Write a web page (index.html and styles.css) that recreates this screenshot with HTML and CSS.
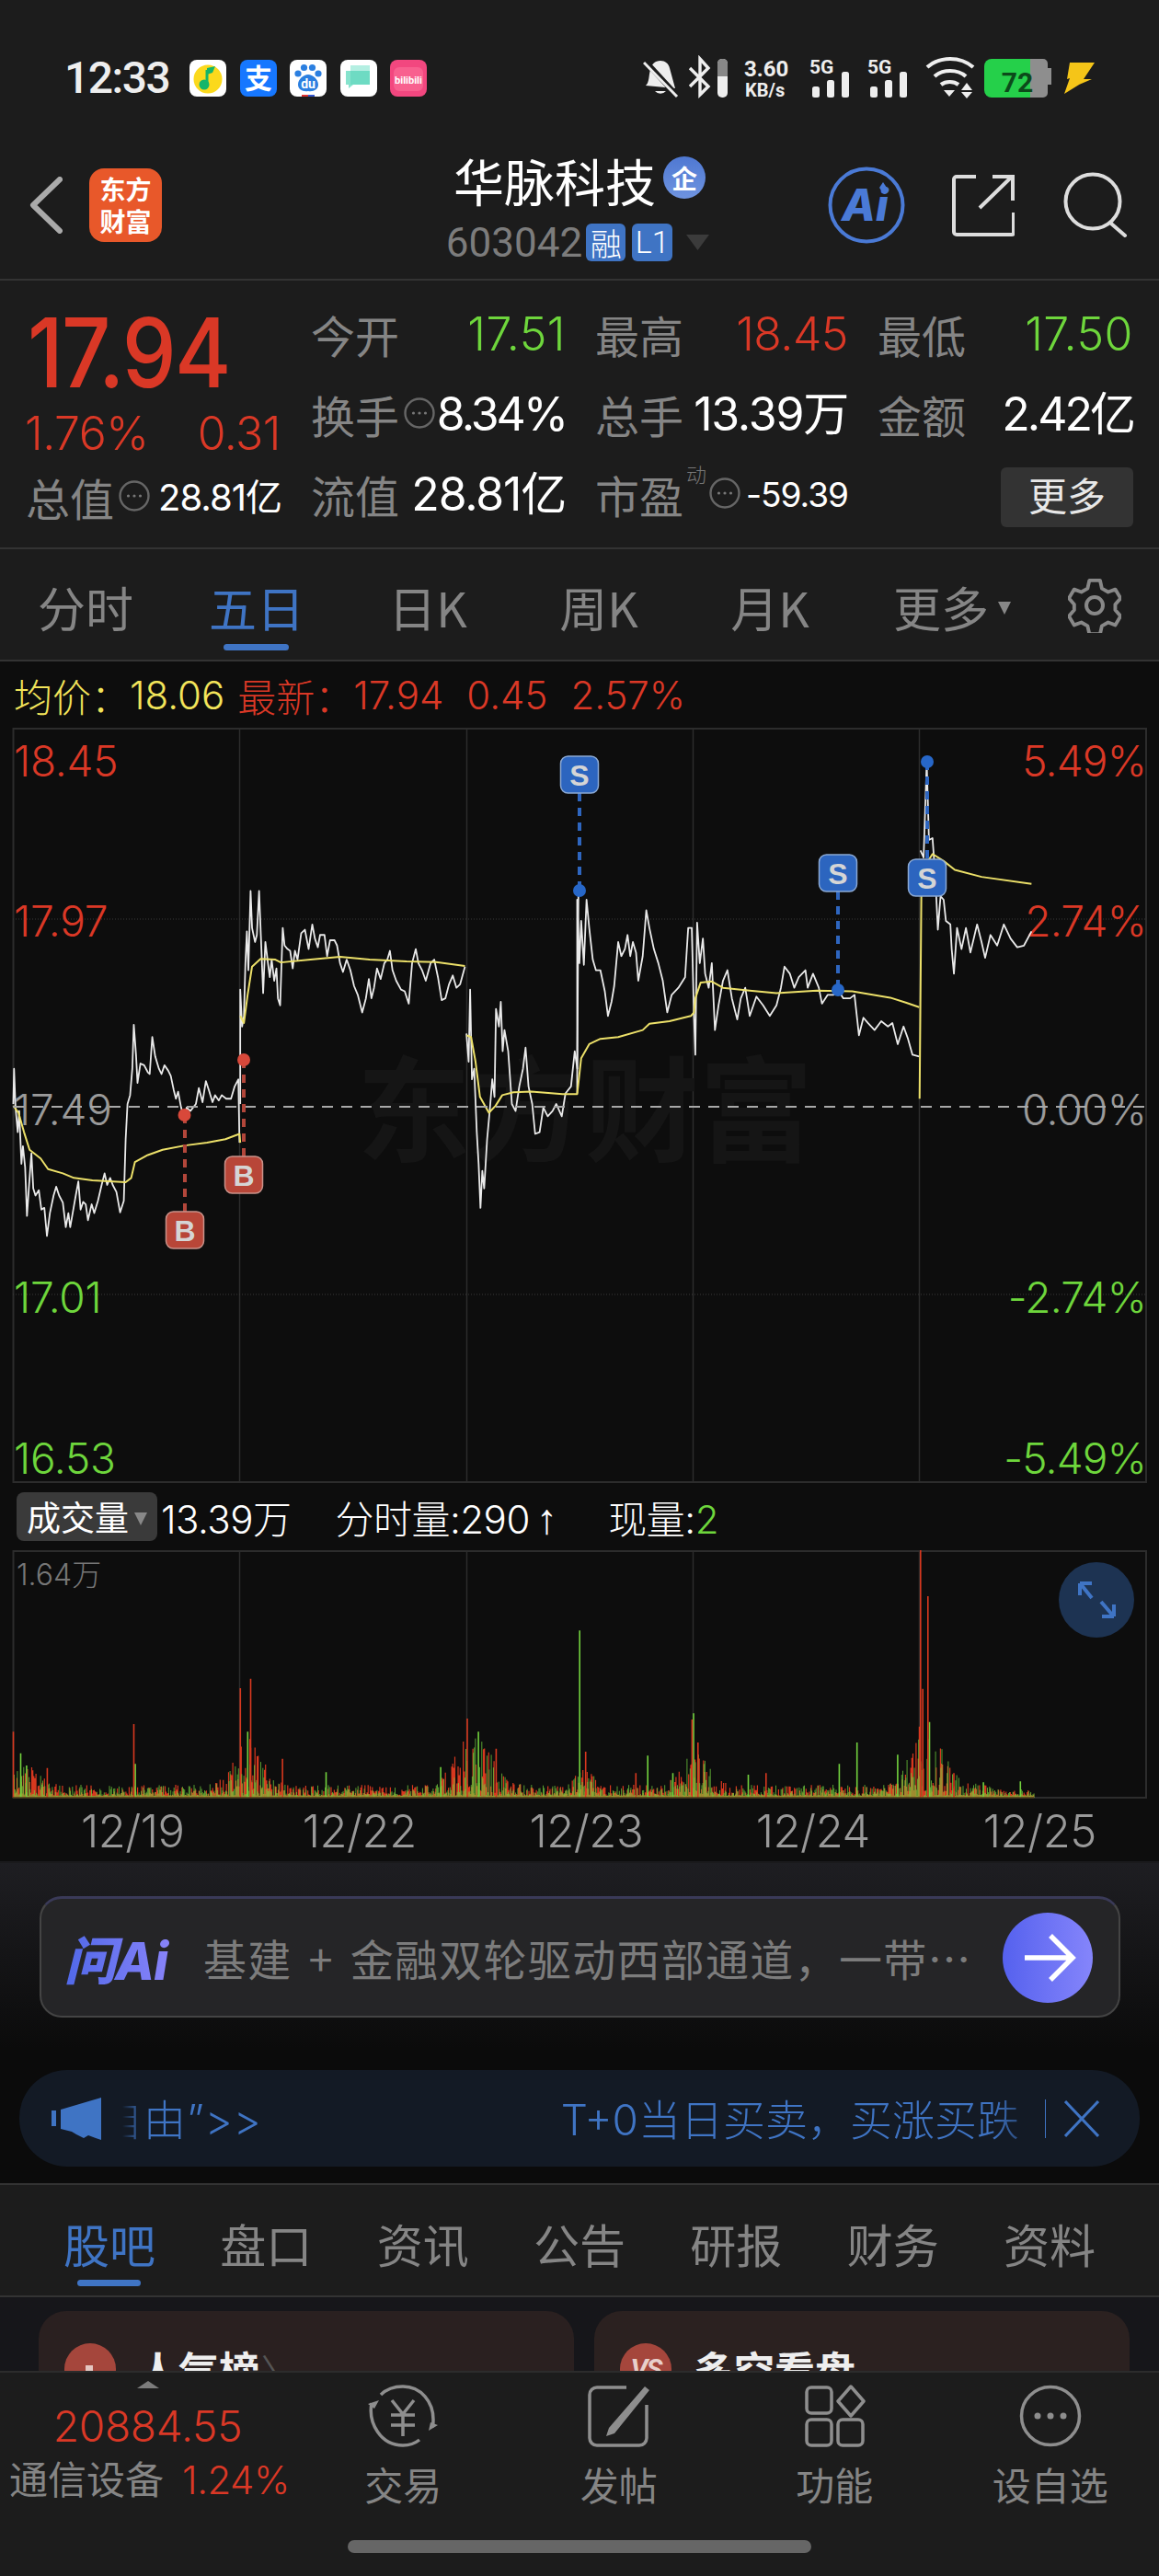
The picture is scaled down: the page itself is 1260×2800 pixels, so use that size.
FILE: index.html
```html
<!DOCTYPE html>
<html lang="zh-CN">
<head>
<meta charset="utf-8">
<title>华脉科技</title>
<link rel="stylesheet" href="styles.css">
</head>
<body>
<svg class="defs" aria-hidden="true"><symbol id="dots" viewBox="0 0 34 34"><circle cx="17" cy="17" r="15.5" fill="none" stroke="#666" stroke-width="2.4"/><circle cx="10.5" cy="17" r="1.6" fill="#777"/><circle cx="17" cy="17" r="1.6" fill="#777"/><circle cx="23.5" cy="17" r="1.6" fill="#777"/></symbol></svg>
<div class="page">
  <div class="status">
    <span class="time">12:33</span>
    <div class="apps">
      <svg class="app" viewBox="0 0 40 40"><rect width="40" height="40" rx="8" fill="#fff"/><circle cx="20" cy="21" r="15.5" fill="#fbd91c"/><path d="M19 11v16" stroke="#14b56a" stroke-width="3"/><circle cx="16" cy="27" r="5.5" fill="#14b56a"/><path d="M19 9l9-2-3 7-6 2z" fill="#14b56a"/></svg>
      <svg class="app" viewBox="0 0 40 40"><rect width="40" height="40" rx="8" fill="#1677ff"/><text x="20" y="31" class="app-zhi">支</text></svg>
      <svg class="app" viewBox="0 0 40 40"><rect width="40" height="40" rx="8" fill="#fff"/><path d="M9 27c0-6 6-11 11-11s11 5 11 11c0 5-5 8-11 7-6 1-11-2-11-7z" fill="#2b7fe0"/><circle cx="9" cy="15" r="3.6" fill="#2b7fe0"/><circle cx="15.500" cy="8.500" r="3.6" fill="#2b7fe0"/><circle cx="24.500" cy="8.500" r="3.6" fill="#2b7fe0"/><circle cx="31" cy="15" r="3.6" fill="#2b7fe0"/><text x="20" y="31" class="app-du">du</text><rect x="13" y="38" width="7" height="2" fill="#d33"/><rect x="20" y="38" width="7" height="2" fill="#35c"/></svg>
      <svg class="app" viewBox="0 0 40 40"><rect width="40" height="40" rx="8" fill="#fff"/><path d="M11 6h21v20H11z" fill="#b4efe2"/><path d="M6 12h26v15H14l-5 4v-4H6z" fill="#86e3cd"/><path d="M11 12h21v15H11z" fill="#5fd6bd" opacity=".6"/></svg>
      <svg class="app" viewBox="0 0 40 40"><rect width="40" height="40" rx="8" fill="#f2477f"/><rect x="4" y="8" width="32" height="26" rx="6" fill="#f8608f"/><text x="20" y="26" class="app-bili">bilibili</text></svg>
    </div>
    <svg class="status-right" viewBox="699 60 495 50">
      <path d="M702 93c4-4 3-10 5-17 1-6 5-10 11-10 5 0 9 3 10 8l6 22z M712 99a8 8 0 0 0 12 0z" fill="#eee"/><path d="M701 66l35 38" stroke="#1c1c1c" stroke-width="6"/><path d="M700 68l36 37" stroke="#eee" stroke-width="3"/>
      <path d="M750 74l20 20-9 9V64l9 10-20 20" fill="none" stroke="#eee" stroke-width="3.4"/>
      <rect x="780" y="64" width="11" height="42" rx="5" fill="#eee"/><path d="M780 69a5 5 0 0 1 5-5h1a5 5 0 0 1 5 5v14h-11z" fill="#888"/>
      <text x="809" y="83" class="st-net">3.60</text><text x="810" y="105" class="st-kb">KB/s</text>
      <text x="880" y="80" class="st-5g">5G</text><g fill="#eee"><rect x="883" y="94" width="8" height="12" rx="2.500"/><rect x="899" y="87" width="8" height="19" rx="2.500"/><rect x="915" y="78" width="8" height="28" rx="2.500"/></g>
      <text x="943" y="80" class="st-5g">5G</text><g fill="#eee"><rect x="946" y="94" width="8" height="12" rx="2.500"/><rect x="962" y="87" width="8" height="19" rx="2.500"/><rect x="978" y="78" width="8" height="28" rx="2.500"/></g>
      <g fill="none" stroke="#eee" stroke-width="4.200"><path d="M1008 73c14-12 36-12 50 0"/><path d="M1016 83c9-8 25-8 34 0"/><path d="M1023 92c5-4 14-4 19 0" /></g>
      <path d="M1026 98h12l-6 7zM1051 90l6 8h-12zM1045 100h12l-6 7z" fill="#eee"/>
      <path d="M1070 72a8 8 0 0 1 8-8h42v42h-42a8 8 0 0 1-8-8z" fill="#25d04a"/><path d="M1120 64h14a5 5 0 0 1 5 5v5h4v18h-4v9a5 5 0 0 1-5 5h-14z" fill="#8e8e8e"/>
      <text x="1106" y="100" class="st-batt">72</text>
      <path d="M1163 68h27l-12 18h9l-14 6 5-3-21 13 6-17-3 1z" fill="#f5c518"/>
    </svg>
  </div>

  <header class="head">
    <div class="head-left">
      <svg class="back" viewBox="0 0 36 62"><path d="M33 3L4 31l29 28" fill="none" stroke="#aaa" stroke-width="6" stroke-linecap="round" stroke-linejoin="round"/></svg>
      <div class="logo"><span>东方</span><span>财富</span></div>
    </div>
    <div class="head-mid">
      <div class="title-row"><span class="title">华脉科技</span><span class="qi">企</span></div>
      <div class="sub-row"><span class="code">603042</span><span class="tag">融</span><span class="tag tag-l">L1</span><svg class="caret" viewBox="0 0 25 17"><path d="M0 0h25L12.500 17z" fill="#3b3b3b"/></svg></div>
    </div>
    <div class="head-right">
      <svg class="ic-ai" viewBox="0 0 84 84"><circle cx="42" cy="42" r="39.500" fill="none" stroke="#4a7ad6" stroke-width="4"/><text x="15" y="59" class="ai-txt">Ai</text><path d="M60 17l4 6-4 6-4-6z" fill="#4a7ad6"/></svg>
      <svg class="ic-share" viewBox="0 0 68 68"><path d="M26 3H5a3 3 0 0 0-3 3v57a3 3 0 0 0 3 3h60a2 2 0 0 0 2-2V42" fill="none" stroke="#ddd" stroke-width="4"/><path d="M30 37L65 3M44 3h22v26" fill="none" stroke="#ddd" stroke-width="4"/></svg>
      <svg class="ic-search" viewBox="0 0 70 72"><circle cx="32" cy="32" r="29.500" fill="none" stroke="#ddd" stroke-width="4"/><path d="M52 56l15 13" stroke="#ddd" stroke-width="4" stroke-linecap="round"/></svg>
    </div>
  </header>

  <section class="quote">
    <div class="q-left">
      <div class="price-row"><span class="price">17.94</span></div>
      <div class="change-row"><span>1.76%</span><span>0.31</span></div>
      <div class="cap-row"><span class="lbl">总值</span><svg class="dots"><use href="#dots"/></svg><span class="val cap-val">28.81亿</span></div>
    </div>
    <div class="q-grid">
      <div class="cell"><span class="lbl">今开</span><span class="val green">17.51</span></div>
      <div class="cell"><span class="lbl">最高</span><span class="val red">18.45</span></div>
      <div class="cell"><span class="lbl">最低</span><span class="val green">17.50</span></div>
      <div class="cell"><span class="lbl">换手</span><svg class="dots"><use href="#dots"/></svg><span class="val val-tight">8.34%</span></div>
      <div class="cell"><span class="lbl">总手</span><span class="val val-mid">13.39万</span></div>
      <div class="cell"><span class="lbl">金额</span><span class="val val-tight">2.42亿</span></div>
      <div class="cell"><span class="lbl">流值</span><span class="val val-mid">28.81亿</span></div>
      <div class="cell cell-pe"><span class="lbl">市盈</span><sup class="dyn">动</sup><svg class="dots"><use href="#dots"/></svg><span class="val pe-val">-59.39</span></div>
      <div class="cell cell-more"><span class="more-btn">更多</span></div>
    </div>
  </section>

  <nav class="tabs">
    <span class="tab">分时</span>
    <span class="tab tab-on">五日</span>
    <span class="tab">日K</span>
    <span class="tab">周K</span>
    <span class="tab">月K</span>
    <span class="tab">更多<i class="tri"></i></span>
    <svg class="gear" viewBox="0 0 58 60"><path d="M23 3h12l2 9 7 4 8-3 6 10-6 7v6l6 7-6 10-8-3-7 4-2 9H23l-2-9-7-4-8 3-6-10 6-7v-6l-6-7 6-10 8 3 7-4z" transform="translate(1 0) scale(.97)" fill="none" stroke="#888" stroke-width="4" stroke-linejoin="round"/><circle cx="29" cy="30" r="9" fill="none" stroke="#888" stroke-width="4"/></svg>
  </nav>

  <main class="chart-wrap">
    <div class="avg"><span class="yel">均价：</span><span class="yel avg-n">18.06</span><span class="red avg-l">最新：</span><span class="red avg-n">17.94</span><span class="red avg-n avg-g">0.45</span><span class="red avg-n avg-g">2.57%</span></div>
    <svg class="price-chart" viewBox="0 792 1260 820">
      <rect x="14.500" y="793" width="1231.500" height="819" fill="none" stroke="#2c2c2c" stroke-width="2"/>
      <path d="M260.500 793V1612M507.500 793V1612M753.500 793V1612M999.500 793V1612" stroke="#2c2c2c" stroke-width="1.500"/>
      <path d="M14 1000H1246M14 1408H1246" stroke="#3a3a3a" stroke-dasharray="1 2"/>
      <text x="388" y="1254" class="wm">东方财富</text>
      <text x="15" y="845" class="lab red">18.45</text><text x="15" y="1019" class="lab red">17.97</text><text x="15" y="1224" class="lab gray">17.49</text><text x="15" y="1428" class="lab green">17.01</text><text x="15" y="1603" class="lab green">16.53</text>
      <text x="1246" y="845" class="lab lab-r red">5.49%</text><text x="1246" y="1019" class="lab lab-r red">2.74%</text><text x="1246" y="1224" class="lab lab-r gray">0.00%</text><text x="1246" y="1428" class="lab lab-r green">-2.74%</text><text x="1246" y="1603" class="lab lab-r green">-5.49%</text>
      <g transform="translate(0 780) scale(.4018 .3827)">
        <polyline class="ln-w" points="36,1100 38,1000 42,1110 48,1180 52,1120 58,1270 62,1220 68,1280 73,1418 78,1340 85,1240 90,1340 96,1360 105,1345 112,1400 120,1395 127,1475 135,1410 145,1360 152,1335 160,1360 170,1380 178,1450 185,1410 190,1450 200,1390 205,1360 212,1320 218,1400 225,1378 232,1385 238,1430 248,1385 255,1410 265,1375 275,1330 283,1297 290,1330 298,1310 305,1330 315,1350 325,1408 335,1375 340,1200 345,1100 352,1075 358,1000 362,875 368,960 372,1040 380,985 390,990 400,1010 405,1015 412,910 420,965 430,1000 437,1015 445,990 455,1005 462,1020 470,1060 476,1085 482,1065 490,1110 498,1140 505,1110 515,1120 530,1100 538,1055 548,1095 557,1035 565,1060 575,1095 582,1075 592,1090 600,1075 612,1085 625,1085 635,1050 645,1030 648,1210"/>
        <polyline class="ln-w" points="650,1100 650,775 655,880 660,850 664,700 668,610 672,720 678,495 682,600 690,640 695,620 701,495 705,600 712,785 718,640 725,700 730,740 735,690 742,750 748,715 752,800 758,820 765,600 770,650 778,660 785,665 792,715 798,665 805,690 815,615 825,605 835,660 845,590 852,630 860,655 866,620 878,620 885,680 893,635 905,635 912,650 920,700 928,725 938,690 948,720 958,765 968,790 980,840 990,800 998,745 1005,800 1012,770 1020,715 1030,745 1040,700 1048,690 1055,665 1062,720 1072,750 1085,775 1095,780 1106,815 1115,700 1125,660 1132,700 1142,720 1152,750 1165,700 1175,690 1185,740 1195,805 1205,800 1215,760 1225,735 1235,770 1245,760 1258,710"/>
        <polyline class="ln-w" points="1262,900 1268,980 1272,775 1277,1030 1283,1000 1290,1180 1295,1270 1300,1395 1305,1290 1310,1340 1318,1200 1325,1120 1332,1030 1338,1080 1342,830 1350,880 1355,810 1360,950 1365,890 1375,950 1385,1100 1395,1120 1405,1050 1415,1000 1422,940 1430,1050 1440,1100 1448,1185 1460,1180 1470,1110 1482,1135 1495,1120 1505,1100 1520,1135 1530,1070 1545,1050 1555,950 1562,1000 1565,500"/>
        <polyline class="ln-y" points="36,1105 50,1125 65,1180 80,1230 110,1255 130,1285 170,1297 200,1310 250,1317 340,1322 355,1310 365,1265 400,1245 440,1230 500,1218 560,1210 610,1200 648,1185 650,1210"/>
        <polyline class="ln-y" points="650,850 660,870 670,790 682,710 705,688 745,690 760,698 840,690 920,682 1000,690 1100,695 1180,697 1258,708"/>
      </g>
      <g transform="translate(500 780) scale(.4847 .3827)">
        <polyline class="ln-w" points="263,1070 263,520 268,700 272,580 278,705 284,520 290,600 298,690 305,720 315,720 325,780 332,850 340,810 346,765 355,640 362,680 370,660 376,620 382,680 388,640 395,670 400,750 410,680 418,550 425,600 435,660 445,700 455,750 465,840 475,790 490,770 505,740 512,600 520,600 525,850 528,960 532,585 538,700 545,630 550,730 558,770 565,700 572,890 580,820 590,750 600,720 610,800 622,860 630,800 640,770 650,850 665,795 680,820 695,850 710,820 720,770 728,710 740,730 750,770 760,740 775,720 780,770 792,730 805,770 812,815 825,790 838,790 850,780 860,800 875,800 885,790 895,905 905,855 915,870 930,890 945,865 960,880 970,870 982,930 995,880 1005,915 1015,960 1030,965"/>
        <polyline class="ln-w" points="1033,380 1040,400 1047,130 1052,350 1060,345 1066,450 1072,605 1078,510 1085,520 1090,580 1100,590 1103,660 1108,730 1115,600 1125,660 1135,600 1145,670 1160,590 1170,640 1178,685 1190,620 1205,650 1220,590 1235,630 1250,655 1265,650 1282,610"/>
        <polyline class="ln-y" points="15,905 25,910 35,980 45,1080 65,1125 80,1105 95,1075 120,1067 160,1065 230,1072 263,1072 272,970 290,930 315,915 355,910 410,890 425,872 470,865 518,850 525,840 528,800 540,755 565,752 590,770 650,778 710,785 800,778 880,780 965,798 1000,812 1030,825"/>
        <polyline class="ln-y" points="1031,1085 1035,500 1045,420 1060,390 1085,410 1110,435 1170,455 1282,475"/>
      </g>
      <path d="M14 1204H1246" stroke="#a8a8a8" stroke-width="2" stroke-dasharray="12 9"/>
      <path d="M201 1213V1318M265 1153V1258" class="mk-line-b"/>
      <path d="M630 863V969M911 970V1077M1008 829V935" class="mk-line-s"/>
      <circle cx="200.500" cy="1213" r="7" fill="#d8483a"/><circle cx="265" cy="1153" r="7" fill="#d8483a"/>
      <circle cx="630" cy="969" r="7" fill="#2767c8"/><circle cx="911" cy="1077" r="7" fill="#2767c8"/><circle cx="1008" cy="829" r="7" fill="#2767c8"/>
      <g class="bdg-b"><rect x="180.500" y="1318" width="41" height="40" rx="8"/><text x="201" y="1350">B</text><rect x="244.500" y="1258" width="41" height="40" rx="8"/><text x="265" y="1290">B</text></g>
      <g class="bdg-s"><rect x="609.500" y="823" width="41" height="40" rx="8"/><text x="630" y="855">S</text><rect x="890.500" y="930" width="41" height="40" rx="8"/><text x="911" y="962">S</text><rect x="987.500" y="935" width="41" height="40" rx="8"/><text x="1008" y="967">S</text></g>
    </svg>
    <div class="vol-row">
      <span class="vol-sel">成交量<i class="tri tri-sm"></i></span>
      <span class="vol-t">13.39万</span>
      <span class="vol-t vol-a">分时量:290<span class="arr">↑</span></span>
      <span class="vol-t vol-b">现量:<span class="green">2</span></span>
    </div>
    <svg class="vol-chart" viewBox="0 1686 1260 270">
      <rect x="14.500" y="1687" width="1231.500" height="268" fill="none" stroke="#2c2c2c" stroke-width="2"/>
      <path d="M260.500 1687V1955M507.500 1687V1955M753.500 1687V1955M999.500 1687V1955" stroke="#2c2c2c" stroke-width="1.500"/>
      <g id="bars"></g>
      <text x="18" y="1724" class="vol-max">1.64万</text>
      <circle cx="1192" cy="1740" r="41" fill="#1d3352"/>
      <path d="M1174 1722h13M1174 1722v13M1175 1723l12 15M1211 1758h-13M1211 1758v-13M1209 1756l-12-14" fill="none" stroke="#3f74c4" stroke-width="4"/>
    </svg>
    <div class="dates"><span>12/19</span><span>12/22</span><span>12/23</span><span>12/24</span><span>12/25</span></div>
  </main>

  <section class="promo">
    <div class="ask">
      <span class="ask-logo">问Ai</span>
      <span class="ask-text">基建 + 金融双轮驱动西部通道，一带…</span>
      <svg class="ask-go" viewBox="0 0 98 98"><defs><linearGradient id="g1" x1="0" x2="1"><stop offset="0" stop-color="#5561ee"/><stop offset="1" stop-color="#8585fb"/></linearGradient></defs><circle cx="49" cy="49" r="49" fill="url(#g1)"/><path d="M24 49h50M52 25l24 24-24 24" fill="none" stroke="#fff" stroke-width="5.500"/></svg>
    </div>
    <div class="notice">
      <svg class="spk" viewBox="0 0 56 46"><path d="M0 14h5v17H0zM10 13l44-13v46l-6-2-8-3-5 3-8-4-5-3-12-3z" fill="#3f74c4"/></svg>
      <span class="n-left">自由”&gt;&gt;</span>
      <span class="n-right">T+0当日买卖，买涨买跌</span>
      <i class="n-sep"></i>
      <svg class="n-x" viewBox="0 0 38 40"><path d="M1 1l36 38M37 1L1 39" fill="none" stroke="#3f74c4" stroke-width="3"/></svg>
    </div>
  </section>

  <section class="sub-tabs">
    <span class="stab stab-on">股吧</span><span class="stab">盘口</span><span class="stab">资讯</span><span class="stab">公告</span><span class="stab">研报</span><span class="stab">财务</span><span class="stab">资料</span>
  </section>

  <section class="cards">
    <div class="card"><i class="card-dot">
      <svg class="card-ic" viewBox="0 0 56 56"><path d="M14 30h6v20h-6zM23 24h8v26h-8zM34 34h8v16h-8z" fill="#e5c7c2"/></svg></i><span class="card-t">人气榜</span><span class="card-c">〉</span></div>
    <div class="card card-b"><i class="card-dot card-vs">VS</i><span class="card-t">多空看盘</span></div>
  </section>

  <footer class="nav">
    <div class="nav-idx">
      <i class="nav-up"></i>
      <span class="idx-v">20884.55</span>
      <span class="idx-n">通信设备<b class="idx-p">1.24%</b></span>
    </div>
    <div class="nav-it">
      <svg class="nav-ic" viewBox="0 0 76 68"><path d="M4 20C0 42 14 66 38 66c7 0 13-2 18-6M14 11C20 5 28 2 38 2c20 0 33 17 33 36 0 3 0 6-1 8" fill="none" stroke="#8e8e8e" stroke-width="3.500"/><path d="M0 21l12-4-5 9zM76 44l-10 6 2-9z" fill="#8e8e8e"/><path d="M26 17l12 15 12-15M38 32v24M25 33h26M25 44h26" fill="none" stroke="#8e8e8e" stroke-width="3.500"/></svg>
      <span>交易</span>
    </div>
    <div class="nav-it">
      <svg class="nav-ic" viewBox="0 0 76 68"><path d="M46 3H14a8 8 0 0 0-8 8v47a8 8 0 0 0 8 8h46a8 8 0 0 0 8-8V22" fill="none" stroke="#8e8e8e" stroke-width="3.500"/><path d="M66 2l5 4-38 47-9 3 3-9z" fill="#8e8e8e"/></svg>
      <span>发帖</span>
    </div>
    <div class="nav-it">
      <svg class="nav-ic" viewBox="0 0 76 68"><g fill="none" stroke="#8e8e8e" stroke-width="3.500"><rect x="8" y="3" width="27" height="28" rx="5"/><rect x="8" y="38" width="27" height="28" rx="5"/><rect x="42" y="38" width="27" height="28" rx="5"/><path d="M56 2l14 16-14 16-14-16z" stroke-linejoin="round"/></g></svg>
      <span>功能</span>
    </div>
    <div class="nav-it">
      <svg class="nav-ic" viewBox="0 0 76 68"><circle cx="38" cy="34" r="31.500" fill="none" stroke="#8e8e8e" stroke-width="3.500"/><circle cx="24" cy="34" r="3.500" fill="#8e8e8e"/><circle cx="38" cy="34" r="3.500" fill="#8e8e8e"/><circle cx="52" cy="34" r="3.500" fill="#8e8e8e"/></svg>
      <span>设自选</span>
    </div>
    <i class="home-bar"></i>
  </footer>
</div>
<script src="chart.js"></script>
</body>
</html>
```
FILE: styles.css
```css
* { box-sizing: border-box; }
html, body { margin: 0; padding: 0; background: #1c1c1c; }
.defs { position: absolute; width: 0; height: 0; }
.page { width: 1260px; height: 2800px; overflow: hidden; background: #1c1c1c; color: #fff; font-family: Inter, "Noto Sans CJK SC", sans-serif; display: flex; flex-direction: column; }
svg text { font-family: Inter, "Noto Sans CJK SC", sans-serif; }
i { font-style: normal; display: block; }
.red { color: #da3826; fill: #da3826; }
.green { color: #6ed63c; fill: #6ed63c; }
.gray { fill: #9a9a9a; }
.yel { color: #f2e45a; }

.status { height: 100px; flex: none; display: flex; align-items: flex-start; padding: 62px 0 0 70px; }
.time { font: 500 48px/46px Roboto, sans-serif; width: 136px; color: #eee; letter-spacing: -1.500px; }
.apps { display: flex; gap: 14.600px; margin-top: 3px; }
.app { width: 40px; height: 40px; display: block; }
.app-zhi { font-size: 30px; fill: #fff; text-anchor: middle; font-weight: 700; }
.app-du { font: 700 14px Roboto, sans-serif; fill: #fff; text-anchor: middle; }
.app-bili { font: 700 11px Roboto, sans-serif; fill: #fff; text-anchor: middle; }
.status-right { width: 495px; height: 50px; margin-left: auto; margin-right: 66px; margin-top: -2px; display: block; }
svg text.st-net { font: 700 24px Roboto, sans-serif; fill: #eee; }
svg text.st-kb { font: 700 20px Roboto, sans-serif; fill: #eee; }
svg text.st-5g { font: 700 21px Roboto, sans-serif; fill: #eee; }
svg text.st-batt { font: 700 30px Roboto, sans-serif; fill: #0c4a1a; text-anchor: middle; }

.head { height: 205px; flex: none; display: grid; grid-template-columns: 1fr auto 1fr; align-items: center; padding-top: 42px; border-bottom: 2px solid #333; }
.head-left { display: flex; align-items: center; padding-left: 32px; gap: 29px; }
.back { width: 36px; height: 62px; display: block; }
.logo { width: 79px; height: 80px; border-radius: 16px; background: #e8582a; display: flex; flex-direction: column; align-items: center; justify-content: center; font-family: "Noto Sans CJK SC", sans-serif; font-size: 28px; line-height: 35px; font-weight: 700; }
.head-mid { display: flex; flex-direction: column; align-items: center; margin-top: 9px; }
.title-row { display: flex; align-items: center; gap: 8px; height: 70px; }
.title { font-size: 55px; line-height: 70px; font-family: "Noto Sans CJK SC", sans-serif; }
.qi { width: 46px; height: 46px; border-radius: 50%; background: linear-gradient(#4f78d2, #6f94e0); font-size: 28px; font-weight: 700; display: flex; align-items: center; justify-content: center; margin-top: -4px; }
.sub-row { display: flex; align-items: center; height: 62px; margin-top: 3px; padding-right: 4px; }
.code { font: 400 44px/62px Roboto, sans-serif; color: #7c7c7c; margin-right: 4px; }
.tag { width: 43px; height: 41px; border-radius: 6px; background: #3f74c4; color: #fff; font-size: 34px; line-height: 41px; text-align: center; font-family: "Noto Sans CJK SC", sans-serif; font-weight: 300; }
.tag-l { width: 44px; margin-left: 7px; font-family: Roboto, sans-serif; }
.caret { width: 25px; height: 17px; margin-left: 15px; display: block; }
.head-right { display: flex; justify-content: flex-end; align-items: center; padding-right: 34px; }
.ic-ai { width: 84px; height: 84px; margin-right: 51px; }
svg text.ai-txt { font-size: 48px; font-weight: 800; font-style: italic; fill: #4a7ad6; font-family: Inter, sans-serif; }
.ic-share { width: 68px; height: 68px; margin-right: 53px; }
.ic-search { width: 70px; height: 72px; }

.quote { height: 292px; flex: none; display: flex; padding: 15px 28px 0 30px; border-bottom: 2px solid #333; }
.q-left { width: 308px; flex: none; display: flex; flex-direction: column; }
.price-row { height: 125px; }
.price { display: inline-block; font-size: 104px; line-height: 126px; font-weight: 500; color: #da3826; letter-spacing: -2px; transform: scaleX(.9); transform-origin: left center; }
.change-row { width: 278px; height: 50px; margin: 1px 0 0 -3px; display: flex; justify-content: space-between; color: #da3826; font-size: 50px; line-height: 50px; font-weight: 300; letter-spacing: -.5px; }
.cap-row { display: flex; align-items: center; height: 87px; margin: 1px 0 0 -2px; width: 278px; }
.lbl { color: #858585; font-size: 48px; line-height: 87px; font-family: "Noto Sans CJK SC", sans-serif; font-weight: 400; white-space: nowrap; }
.val { color: #fff; font-size: 50px; line-height: 87px; font-weight: 400; margin-left: auto; white-space: nowrap; letter-spacing: -.5px; }
.val.green { color: #6ed63c; font-weight: 300; letter-spacing: .5px; }
.val.red { color: #da3826; font-weight: 300; }
.val-mid { letter-spacing: -1.200px; }
.val-tight { letter-spacing: -3px; }
.cap-val { font-size: 40px; letter-spacing: -1px; }
.dots { width: 34px; height: 34px; margin-left: 5px; flex: none; margin-top: -4px; }
.q-grid { flex: 1; display: grid; grid-template-columns: 277px 275px 278px; grid-auto-rows: 87px; column-gap: 32px; }
.cell { display: flex; align-items: center; }
.dyn { font-size: 22px; line-height: 24px; color: #777; font-weight: 300; margin: -44px 3px 0 3px; }
.pe-val { font-size: 37px; letter-spacing: -1px; }
.cell-pe .dots { margin-left: 0; }
.cell-more { justify-content: flex-end; }
.more-btn { width: 144px; height: 65px; border-radius: 6px; background: #333; text-align: center; font-size: 42px; line-height: 63px; color: #e8e8e8; font-weight: 400; margin-top: 5px; }

.tabs { height: 122px; flex: none; display: grid; grid-template-columns: repeat(5, 186px) 1fr 100px; padding: 8px 20px 2px 0; align-items: center; border-bottom: 2px solid #333; }
.tab { position: relative; text-align: center; font-size: 52px; line-height: 76px; color: #858585; font-weight: 400; font-family: "Noto Sans CJK SC", sans-serif; }
.tab-on { color: #3f74c4; }
.tab-on::after { content: ""; position: absolute; left: 57px; top: 78px; width: 71px; height: 7px; border-radius: 4px; background: #3f74c4; }
.tri { display: inline-block; width: 0; height: 0; border: 7.500px solid transparent; border-top: 14px solid #888; border-bottom: 0; margin-left: 10px; vertical-align: 14px; }
.tri-sm { border-top-color: #888; margin-left: 6px; vertical-align: 6px; }
.gear { width: 58px; height: 60px; justify-self: center; margin-top: -5px; }

.chart-wrap { background: #0d0d0d; height: 1304px; flex: none; display: flex; flex-direction: column; }
.avg { height: 72px; flex: none; display: flex; align-items: center; padding-left: 15px; font-size: 42px; font-weight: 300; }
.avg span { white-space: nowrap; }
.avg-l { margin-left: 14px; }
.avg-g { margin-left: 25px; }
.price-chart { width: 1260px; height: 820px; display: block; flex: none; overflow: visible; }
.wm { font-size: 124px; font-weight: 700; fill: #151515; }
.lab { font-size: 46px; font-weight: 300; letter-spacing: -.2px; }
.lab-r { text-anchor: end; letter-spacing: -.8px; }
.ln-w, .ln-y { fill: none; vector-effect: non-scaling-stroke; stroke-linejoin: round; }
.ln-w { stroke: #eaeaea; stroke-width: 1.800px; }
.ln-y { stroke: #ece069; stroke-width: 2px; }
.mk-line-b { stroke: #b2463a; stroke-width: 4px; stroke-dasharray: 9 7; }
.mk-line-s { stroke: #2e66c0; stroke-width: 4px; stroke-dasharray: 9 7; }
.bdg-b rect { fill: #b84638; stroke: #c9938b; stroke-width: 1.500px; }
.bdg-s rect { fill: #2c65bf; stroke: #8ba9d4; stroke-width: 1.500px; }
.bdg-b text, .bdg-s text { font: 700 32px "Liberation Sans", sans-serif; fill: #d5d5d5; text-anchor: middle; }
.vol-row { height: 74px; flex: none; display: flex; align-items: center; padding-left: 18px; }
.vol-sel { width: 153px; height: 53px; background: #3a3a3a; border-radius: 8px; font-size: 37px; line-height: 52px; padding-left: 11px; white-space: nowrap; font-weight: 400; font-family: "Noto Sans CJK SC", sans-serif; }
.vol-t { font-size: 42px; font-weight: 300; letter-spacing: -.5px; margin-left: 4px; white-space: nowrap; margin-top: 1px; }
.arr { font-family: "Liberation Sans", sans-serif; font-size: 46px; margin-left: 7px; }
.vol-a { margin-left: 48px; }
.vol-b { margin-left: 56px; }
.vol-chart { width: 1260px; height: 270px; display: block; flex: none; }
.vol-max { font-size: 32px; fill: #777; font-weight: 300; }
.dates { height: 68px; flex: none; display: grid; grid-template-columns: repeat(5, 246.500px); padding-left: 21px; align-items: center; color: #999; font-size: 49px; font-weight: 300; letter-spacing: -.5px; padding-top: 2px; }
.dates span { text-align: center; }

.promo { height: 352px; flex: none; background: linear-gradient(#1e1e22, #0b0b0b 58%); border-top: 2px solid #1a1a1c; border-bottom: 2px solid #333; padding: 36px 0 0; display: flex; flex-direction: column; }
.ask { margin: 0 42px 0 43px; height: 132px; border-radius: 24px; background: #252527; border: 2px solid #444; border-top: 3px solid #3a3a58; display: flex; align-items: center; padding-left: 25px; }
.ask-logo { font-size: 56px; font-style: italic; font-weight: 800; width: 151px; flex: none; background: linear-gradient(90deg, #5068e8, #9a8cff); -webkit-background-clip: text; background-clip: text; color: transparent; letter-spacing: -1px; white-space: nowrap; }
.ask-text { color: #7c7c7c; font-size: 47px; white-space: nowrap; font-weight: 400; font-family: "Noto Sans CJK SC", sans-serif; word-spacing: 6px; letter-spacing: 1.300px; }
.ask-go { width: 98px; height: 98px; margin-left: auto; margin-right: 28px; flex: none; }
.notice { margin: 57px 21px 0; height: 105px; border-radius: 52px; background: #131a25; display: flex; align-items: center; padding-left: 35px; color: #3f74c4; font-size: 46px; font-weight: 300; position: relative; }
.spk { width: 56px; height: 46px; flex: none; }
.n-left { margin: -3px 0 0 -3px; white-space: nowrap; flex: none; -webkit-mask-image: linear-gradient(90deg, transparent 24px, #000 46px); mask-image: linear-gradient(90deg, transparent 24px, #000 46px); letter-spacing: 1px; }
.n-right { margin: -3px 0 0 auto; white-space: nowrap; font-weight: 300; -webkit-mask-image: linear-gradient(90deg, #000 94%, rgba(0,0,0,.55) 100%); mask-image: linear-gradient(90deg, #000 94%, rgba(0,0,0,.55) 100%); }
.n-sep { width: 1px; height: 42px; background: #3f74c4; margin: 0 20px 0 28px; flex: none; }
.n-x { width: 38px; height: 40px; margin-right: 44px; flex: none; }

.sub-tabs { height: 122px; flex: none; display: flex; justify-content: space-between; padding: 0 68px 0 68px; border-bottom: 2px solid #333; }
.stab { position: relative; font-size: 50px; line-height: 126px; height: 122px; color: #858585; width: 102px; text-align: center; font-weight: 400; font-family: "Noto Sans CJK SC", sans-serif; }
.stab-on { color: #3f74c4; }
.stab-on::after { content: ""; position: absolute; left: 16px; top: 103px; width: 69px; height: 7px; border-radius: 4px; background: #3f74c4; }
.cards { height: 80px; flex: none; background: #16161a; overflow: hidden; display: flex; gap: 22px; padding: 15px 32px 0 42px; }
.card { flex: 1; height: 200px; border-radius: 30px; background: #2a2020; display: flex; align-items: flex-start; padding: 35px 0 0 28px; position: relative; }
.card-b { background: #2b2120; }
.card-dot { width: 56px; height: 56px; border-radius: 50%; background: #a5463c; flex: none; font: 700 italic 30px/56px Roboto, sans-serif; color: #e8cfcb; text-align: center; }
.card-vs { letter-spacing: -2px; }
.card-ic { width: 56px; height: 56px; display: block; }
.card-t { font-size: 44px; font-weight: 700; line-height: 50px; margin: 3px 0 0 24px; color: #eee; font-family: "Noto Sans CJK SC", sans-serif; white-space: nowrap; }
.card-c { color: #555; font-size: 36px; line-height: 50px; margin: 6px 0 0 2px; }
.nav { flex: 1; background: #1c1c1c; border-top: 2px solid #2c2c2c; position: relative; z-index: 1; display: grid; grid-template-columns: 321px repeat(4, 234.500px); align-items: start; }
.nav-idx { display: flex; flex-direction: column; align-items: center; position: relative; padding-top: 34px; }
.nav-up { position: absolute; left: 149px; top: 9px; width: 0; height: 0; border: 12px solid transparent; border-top: 0; border-bottom: 8px solid #7c7c7c; }
.idx-v { font-size: 46px; font-weight: 300; color: #da3826; letter-spacing: -.2px; line-height: 48px; }
.idx-n { font-size: 42px; line-height: 50px; margin-top: 10px; color: #858585; white-space: nowrap; font-weight: 400; margin-left: 4px; }
.idx-p { color: #da3826; font-weight: 300; margin-left: 20px; letter-spacing: -.5px; }
.nav-it { display: flex; flex-direction: column; align-items: center; padding-top: 13px; font-size: 42px; line-height: 50px; color: #858585; font-weight: 400; }
.nav-ic { width: 76px; height: 68px; display: block; margin-bottom: 18px; }
.home-bar { position: absolute; left: 378px; top: 182px; width: 504px; height: 14px; border-radius: 7px; background: #666; }
```
FILE: chart.js
```js
// Volume histogram: a seeded series of one-pixel bars plus the session's named spikes.
(function () {
  var BASE = 1955, seed = 73;
  function rnd() { seed = (seed * 16807) % 2147483647; return (seed & 0xffff) / 65536; }
  var humps = [[22, 18, 24], [272, 34, 22], [515, 38, 26], [635, 18, 10], [755, 24, 20], [1004, 44, 20], [1030, 14, 18]];
  function env(x) {
    var e = 8;
    humps.forEach(function (h) { var d = (x - h[0]) / h[2]; e += h[1] * Math.exp(-d * d); });
    return e;
  }
  var red = '', green = '';
  for (var x = 15; x < 1124; x += 1.15) {
    var e = env(x) * (x > 1080 ? .6 : 1);
    var a = 2 + Math.pow(rnd(), 2.2) * e * 1.5;
    var b = 2 + Math.pow(rnd(), 2.2) * e * 1.5;
    red += 'M' + x.toFixed(1) + ' ' + BASE + 'V' + (BASE - a).toFixed(1);
    green += 'M' + (x + .5).toFixed(1) + ' ' + BASE + 'V' + (BASE - b).toFixed(1);
  }
  var peaks = [[18,850,'r'],[28,920,'g'],[36,960,'g'],[64,968,'r'],[181,825,'r'],[183,955,'g'],[325,708,'r'],[339,677,'r'],[335,850,'g'],[382,938,'r'],[441,982,'g'],[632,807,'r'],[647,850,'g'],[671,905,'r'],[596,965,'g'],[784,520,'g'],[792,915,'r'],[876,928,'g'],[938,790,'g'],[936,810,'r'],[944,885,'r'],[1135,955,'g'],[1159,885,'g'],[1214,925,'g'],[1245,258,'r'],[1255,408,'r'],[1257,818,'g'],[1248,710,'r'],[1290,985,'r'],[1330,1015,'g'],[1380,1012,'g'],[1036,985,'r'],[1012,990,'g'],[860,985,'r'],[910,985,'g']];
  var pr = '', pg = '';
  peaks.forEach(function (p) {
    var seg = 'M' + (p[0] / 1.244).toFixed(1) + ' ' + BASE + 'V' + (1600 + p[1] / 3).toFixed(1);
    if (p[2] === 'r') pr += seg; else pg += seg;
  });
  var html = '<path d="' + red + '" stroke="#d8381f" stroke-width="1.2" fill="none"/>' +
    '<path d="' + green + '" stroke="#72d23e" stroke-width="1" opacity=".75" fill="none"/>' +
    '<path d="' + pg + '" stroke="#72d23e" stroke-width="1.6" fill="none"/>' +
    '<path d="' + pr + '" stroke="#d8381f" stroke-width="1.6" fill="none"/>' +
    '<path d="M14 1955H1124" stroke="#4a3a18" stroke-width="1.5"/>';
  document.getElementById('bars').innerHTML = html;
})();
```
